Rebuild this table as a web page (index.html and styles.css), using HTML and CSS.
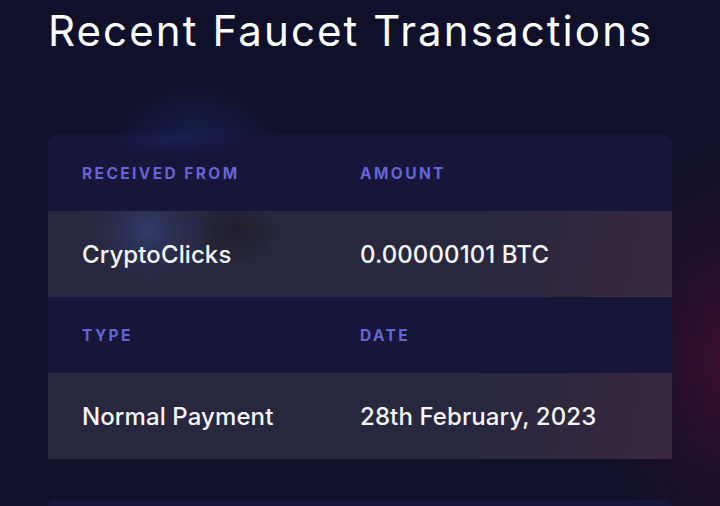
FILE: index.html
```html
<!DOCTYPE html>
<html lang="en">
<head>
<meta charset="utf-8">
<link rel="stylesheet" href="styles.css">
</head>
<body>
<main class="page">
  <h1 class="title">Recent Faucet Transactions</h1>
  <section class="card">
    <div class="row head first">
      <div class="cell">RECEIVED FROM</div>
      <div class="cell">AMOUNT</div>
    </div>
    <div class="row data glowing">
      <div class="cell">CryptoClicks</div>
      <div class="cell">0.00000101 BTC</div>
    </div>
    <div class="row head">
      <div class="cell">TYPE</div>
      <div class="cell">DATE</div>
    </div>
    <div class="row data">
      <div class="cell">Normal Payment</div>
      <div class="cell">28th February, 2023</div>
    </div>
  </section>
  <section class="card next"></section>
</main>
</body>
</html>
```
FILE: styles.css
```css
html, body {
  margin: 0;
  padding: 0;
}
body {
  width: 720px;
  height: 506px;
  overflow: hidden;
  background-color: #0f1029;
  background-image:
    radial-gradient(circle at 195px 175px, rgba(40,65,150,0.6) 0px, rgba(35,55,130,0.25) 55px, rgba(15,16,41,0) 95px),
    radial-gradient(ellipse 140px 220px at 730px 360px, rgba(70,15,50,0.85) 0%, rgba(50,14,45,0.45) 50%, rgba(15,16,41,0) 100%);
  font-family: Inter, "Noto Sans", sans-serif;
  color: #f4f4f8;
}
.page {
  padding: 0 48px;
}
.title {
  margin: 0;
  padding-top: 6px;
  height: 135px;
  box-sizing: border-box;
  font-size: 42px;
  font-weight: 400;
  letter-spacing: 2.1px;
  line-height: 50px;
  color: #ffffff;
}
.card {
  border-radius: 8px 8px 0 0;
  overflow: hidden;
  background: #15163a;
}
.row {
  display: grid;
  grid-template-columns: 278px 1fr;
  padding-left: 34px;
  align-items: center;
}
.row.head {
  height: 76px;
  background: #15163a;
}
.row.head.first {
  background:
    radial-gradient(ellipse 70px 22px at 130px 0px, rgba(30,40,100,0.6) 0%, rgba(21,22,58,0) 100%),
    #15163a;
}
.row.data {
  height: 86px;
  background: linear-gradient(100deg, #27273d 68%, #3d2942 108%);
}
.row.data.glowing {
  background:
    radial-gradient(ellipse 65px 55px at 100px 20px, rgba(60,80,150,0.5) 0%, rgba(50,65,130,0.2) 55%, rgba(39,39,61,0) 100%),
    radial-gradient(ellipse 40px 32px at 188px 20px, rgba(22,22,28,0.55) 0%, rgba(22,22,28,0) 100%),
    linear-gradient(100deg, #27273d 68%, #3d2942 108%);
}
.head .cell {
  font-size: 15.5px;
  font-weight: 700;
  letter-spacing: 2.4px;
  color: #6565d6;
}
.data .cell {
  font-size: 24px;
  font-weight: 500;
  letter-spacing: 0.1px;
  color: #f6f6fa;
}
.card.next {
  margin-top: 41px;
  height: 6px;
  border-radius: 10px 10px 0 0;
  background: #15163a;
}
```
